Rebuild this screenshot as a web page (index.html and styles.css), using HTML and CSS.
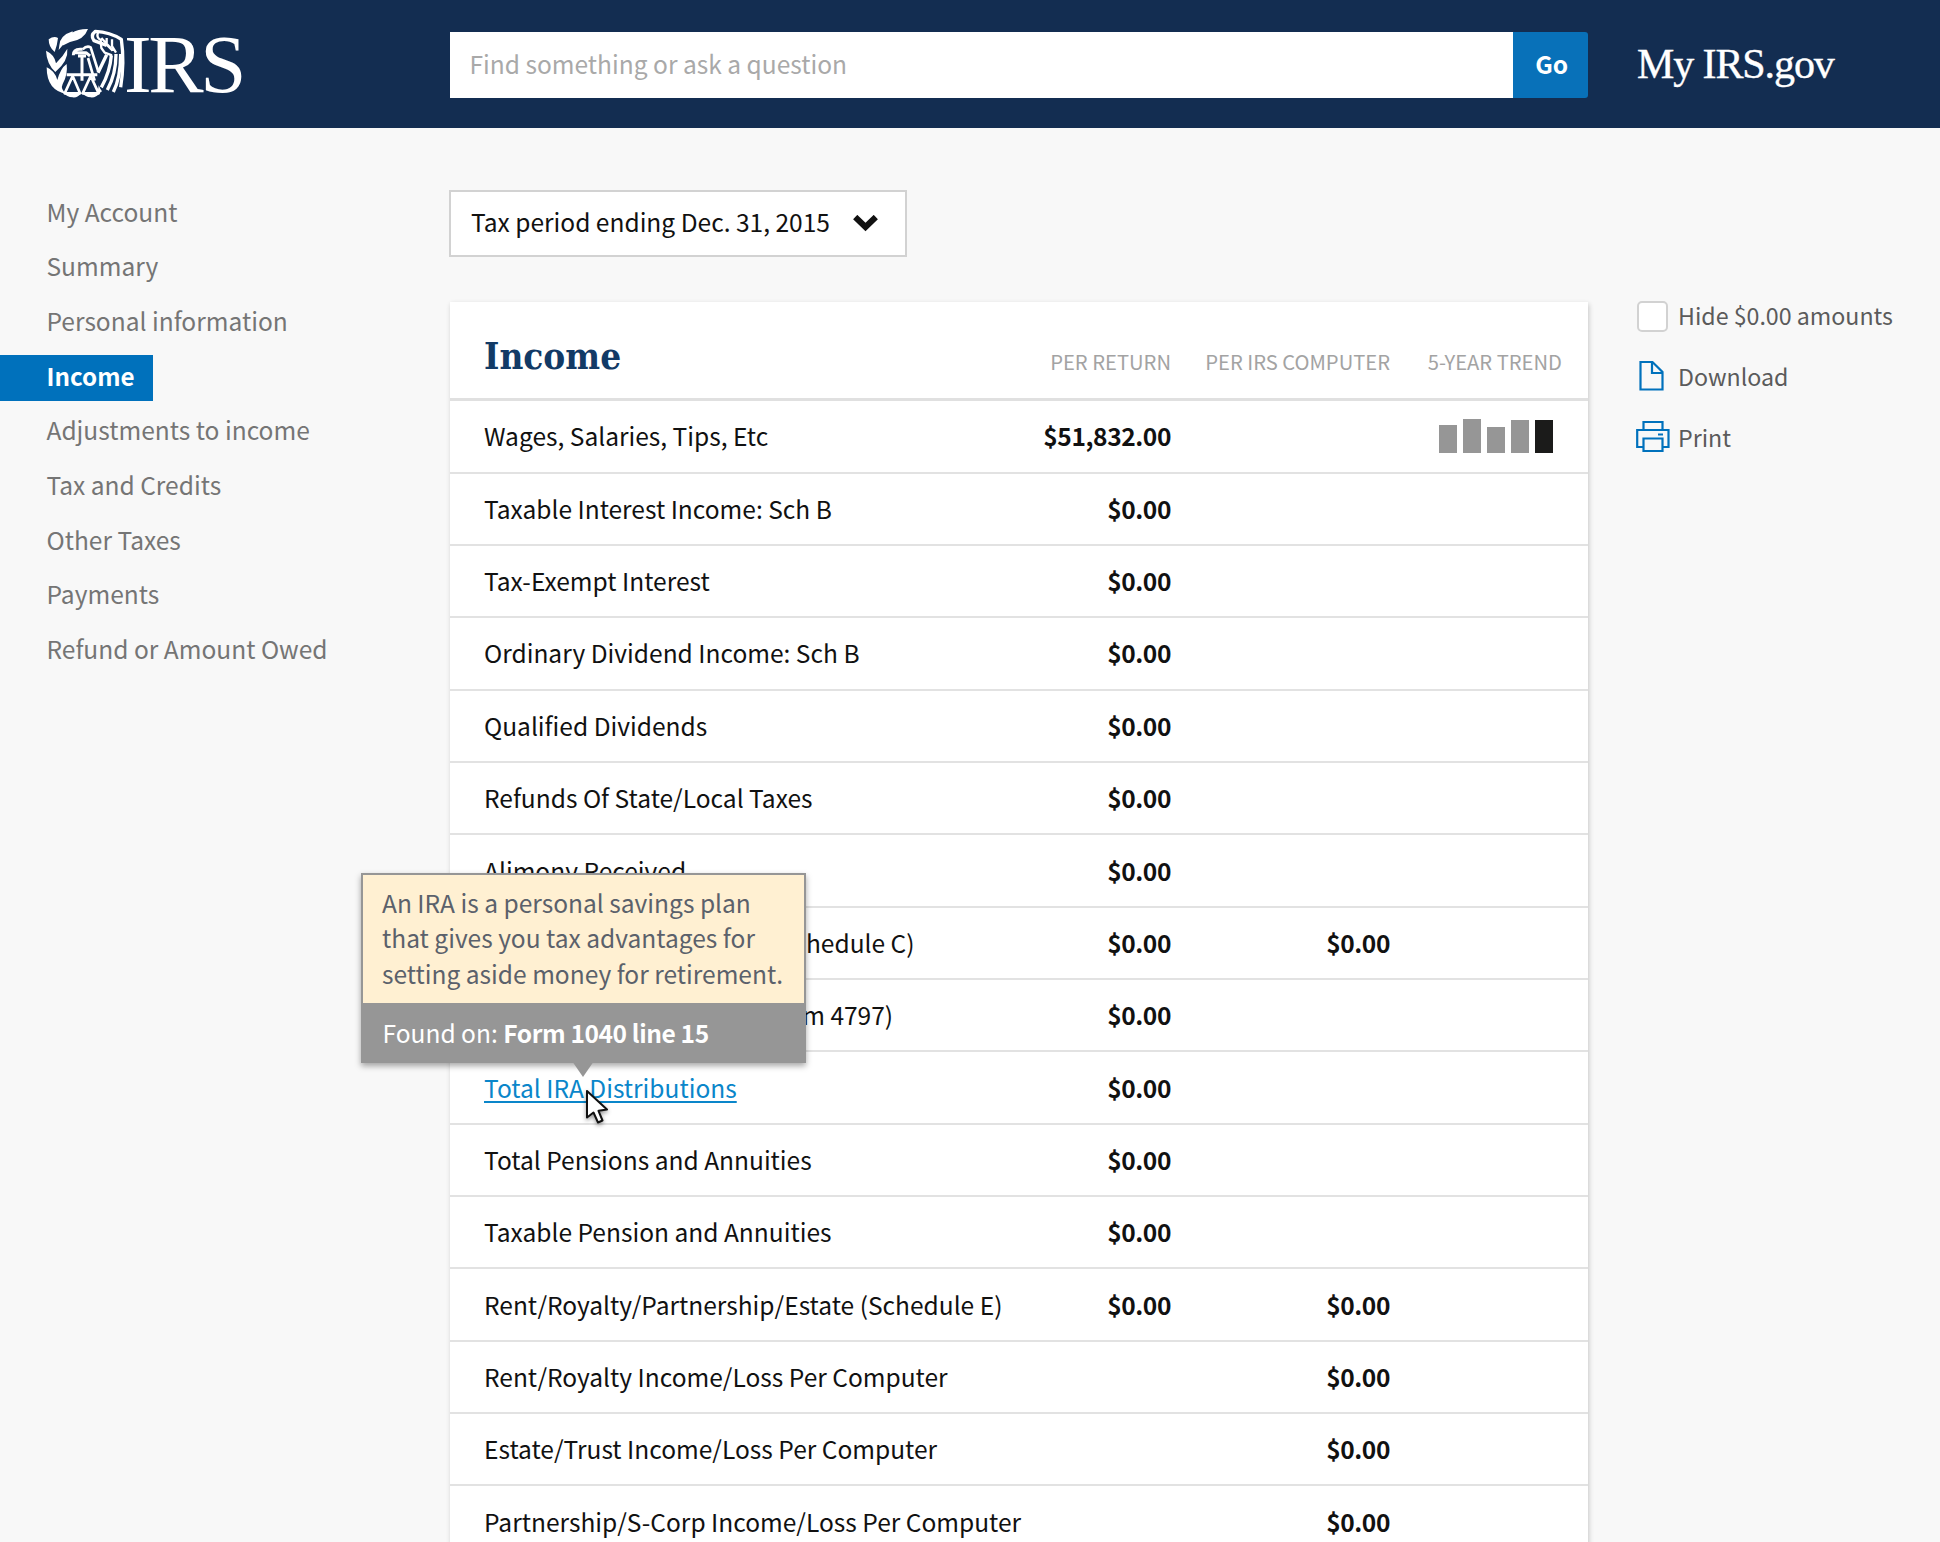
FILE: index.html
```html
<!DOCTYPE html>
<html lang="en">
<head>
<meta charset="utf-8">
<title>My IRS.gov – Income</title>
<link rel="stylesheet" href="styles.css">
</head>
<body>
<header class="masthead">
  <a class="logo" href="#" aria-label="IRS">
    <svg class="emblem" viewBox="0 0 264 240" width="88" height="80" fill="#fff">
      <path d="M20 46 Q36 34 48 42 Q46 62 38 84 Q20 70 20 46Z M52 64 Q54 34 92 22 Q92 44 70 54 L50 78Z M60 62 Q80 14 138 15 Q126 48 84 54 L64 64Z M12 80 Q38 92 42 118 Q64 96 76 74 Q80 110 40 144 Q14 120 12 80Z M14 130 Q38 140 46 168 Q56 132 74 120 Q78 152 62 180 Q54 196 74 210 Q14 200 14 130Z"/>
      <g fill="none" stroke="#fff" stroke-width="8" stroke-linejoin="round">
        <path d="M94 94 Q94 76 114 76 H122 M96 86 H132 L144 96 M108 96 H132 M120 96 V170 M74 152 H166" stroke-width="9"/>
        <path d="M92 156 L68 208 H114 Z M146 156 L122 208 H170 Z"/>
        <path d="M122 76 Q134 64 146 70 L168 140 M138 102 L158 170"/>
        <path d="M168 146 L194 92 M194 64 L156 50 Q144 34 160 22 Q204 24 238 46 Q248 116 236 190" stroke-width="10"/>
        <path d="M168 26 Q162 40 176 48 L178 72 L188 86 L210 94 M178 42 L206 72 M194 42 V62 L212 80 M210 46 V66 L222 86" stroke-width="7"/>
        <path d="M208 94 Q204 144 178 190 M222 90 Q222 150 196 198" stroke-width="10"/>
        <path d="M236 90 Q236 160 214 204" stroke-width="10"/>
      </g>
      <path d="M64 206 H118 Q108 222 92 220 Q74 218 64 206Z M120 206 H174 Q162 222 146 220 Q130 219 120 206Z M170 184 Q176 198 180 202 L166 212Z"/>
    </svg>
    <span class="wordmark">IRS</span>
  </a>
  <form class="search">
    <input class="search-field" type="text" placeholder="Find something or ask a question">
    <button class="search-go" type="button">Go</button>
  </form>
  <a class="site-name" href="#">My IRS.gov</a>
</header>
<div class="page">
  <nav class="side-nav">
    <a href="#">My Account</a>
    <a href="#">Summary</a>
    <a href="#">Personal information</a>
    <a href="#" class="active">Income</a>
    <a href="#">Adjustments to income</a>
    <a href="#">Tax and Credits</a>
    <a href="#">Other Taxes</a>
    <a href="#">Payments</a>
    <a href="#">Refund or Amount Owed</a>
  </nav>
  <main class="content">
    <button class="period" type="button">
      <span>Tax period ending Dec. 31, 2015</span>
      <svg width="25" height="17" viewBox="0 0 25 17"><path d="M2.2 2 L12.5 12 L22.8 2" fill="none" stroke="#111" stroke-width="6"/></svg>
    </button>
    <section class="card">
      <div class="card-head">
        <h1>Income</h1>
        <span class="col">PER RETURN</span>
        <span class="col">PER IRS COMPUTER</span>
        <span class="col">5-YEAR TREND</span>
      </div>
      <div class="row"><span>Wages, Salaries, Tips, Etc</span><b>$51,832.00</b><b></b>
        <div class="trend"><i style="height:28px"></i><i style="height:34px"></i><i style="height:26px"></i><i style="height:33px"></i><i class="now" style="height:33px"></i></div></div>
      <div class="row"><span>Taxable Interest Income: Sch B</span><b>$0.00</b></div>
      <div class="row"><span>Tax-Exempt Interest</span><b>$0.00</b></div>
      <div class="row"><span>Ordinary Dividend Income: Sch B</span><b>$0.00</b></div>
      <div class="row"><span>Qualified Dividends</span><b>$0.00</b></div>
      <div class="row"><span>Refunds Of State/Local Taxes</span><b>$0.00</b></div>
      <div class="row"><span>Alimony Received</span><b>$0.00</b></div>
      <div class="row"><span>Business Income Or Loss (Schedule C)</span><b>$0.00</b><b>$0.00</b></div>
      <div class="row"><span>Other Gains And Losses (Form 4797)</span><b>$0.00</b></div>
      <div class="row"><span class="term"><a href="#">Total IRA Distributions</a>
        <span class="tip"><span class="tip-text">An IRA is a personal savings plan<br>that gives you tax advantages for<br>setting aside money for retirement.</span><span class="tip-source">Found on: <strong>Form 1040 line 15</strong></span></span>
        <svg class="cursor" width="30" height="40" viewBox="0 0 30 40"><path d="M3 3 V29.5 L9.5 24.5 L14 34.5 L18.5 32.5 L14.5 22.8 L23 21.5 Z" fill="#fff" stroke="#111" stroke-width="2" stroke-linejoin="round"/></svg>
      </span><b>$0.00</b></div>
      <div class="row"><span>Total Pensions and Annuities</span><b>$0.00</b></div>
      <div class="row"><span>Taxable Pension and Annuities</span><b>$0.00</b></div>
      <div class="row"><span>Rent/Royalty/Partnership/Estate (Schedule E)</span><b>$0.00</b><b>$0.00</b></div>
      <div class="row"><span>Rent/Royalty Income/Loss Per Computer</span><b></b><b>$0.00</b></div>
      <div class="row"><span>Estate/Trust Income/Loss Per Computer</span><b></b><b>$0.00</b></div>
      <div class="row"><span>Partnership/S-Corp Income/Loss Per Computer</span><b></b><b>$0.00</b></div>
    </section>
  </main>
  <aside class="tools">
    <label><span class="check"></span><span class="label">Hide $0.00 amounts</span></label>
    <a href="#"><svg width="34" height="34" viewBox="0 0 34 34" fill="none" stroke="#0071bc" stroke-width="2.2"><path d="M4.5 3 H16.5 L26.5 13 V30.5 H4.5 Z M16 3 V14 H26.5"/></svg><span class="label">Download</span></a>
    <a href="#"><svg width="34" height="34" viewBox="0 0 34 34" fill="none" stroke="#0071bc" stroke-width="2.2"><path d="M7.5 10 V2 H26.5 V10 M7.5 27 H1.2 V10 H32.5 V27 H26.5 M7.5 18.5 H26.5 V31 H7.5 Z M22 14.5 H27"/></svg><span class="label">Print</span></a>
  </aside>
</div>
</body>
</html>
```
FILE: styles.css
```css
* { box-sizing: border-box; }
body {
  margin: 0;
  height: 1542px;
  overflow: hidden;
  background: #f8f8f8;
  color: #111;
  font: 24.54px/36px "Noto Sans CJK SC", "Open Sans", sans-serif;
}
a { color: inherit; text-decoration: none; }
b, strong { font-weight: 600; letter-spacing: -.4px; }

.masthead { display: flex; align-items: center; height: 128.4px; padding: 0 0 0 42px; background: #132d51; color: #fff; }
.logo { display: flex; align-items: center; width: 408px; height: 80px; }
.wordmark { margin-left: -6px; font: 83px/70px "Liberation Serif", serif; letter-spacing: -3.4px; }
.search { display: flex; width: 1138px; height: 66px; margin: 1px 0 0; }
.search-field { flex: 1; padding: 0 19px 1px 19.5px; border: 0; background: #fff; font: inherit; }
.search-field::placeholder { color: #a9a9a9; opacity: 1; }
.search-go { width: 75.5px; padding: 0 0 2px 3px; border: 0; border-radius: 0 3px 3px 0; background: #0871b9; color: #fff; font: inherit; font-weight: 600; }
.site-name { margin-left: 49px; font: 42px/50px "Liberation Serif", serif; letter-spacing: -1.1px; -webkit-text-stroke: .4px #fff; }

.page { display: flex; align-items: flex-start; }
.side-nav { display: flex; flex-direction: column; align-items: flex-start; gap: 8.25px; width: 450px; padding-top: 62.4px; color: #757575; }
.side-nav a { height: 46.4px; padding: 0 18px 0 46.5px; line-height: 41px; }
.side-nav .active { background: #0071bc; color: #fff; font-size: 24.2px; font-weight: 700; }

.content { width: 1138px; padding-top: 61.5px; }
.period { display: flex; align-items: center; justify-content: space-between; width: 458px; height: 67px; margin: 0 0 45px -1px; padding: 0 27px 0 20px; border: 2px solid #d2d2d2; background: #fff; color: inherit; font: inherit; }
.period span { padding-bottom: 2px; }
.card { background: #fff; box-shadow: 1px 2px 5px rgba(0, 0, 0, .2); }
.card-head, .row { display: grid; grid-template-columns: 543px 144px 219px 1fr; padding: 0 35px 0 34px; }
.card-head { align-items: center; height: 99.4px; padding-right: 26px; border-bottom: 3px solid #e0e0e0; }
.card-head h1 { margin: 0; padding-top: 13px; color: #123a66; font: bold 36.6px/50px "DejaVu Serif Condensed", "DejaVu Serif", serif; }
.col { padding-top: 23px; color: #a3a3a3; font-size: 20.2px; text-align: right; white-space: nowrap; }
.row { align-items: center; height: 72.35px; border-bottom: 2px solid #e2e2e2; white-space: nowrap; }
.row b { text-align: right; }
.trend { display: flex; align-items: flex-end; justify-content: flex-end; gap: 6px; height: 36px; margin-bottom: 2px; }
.trend i { width: 18px; background: #969696; }
.trend .now { background: #1b1b1a; }

.term { position: relative; }
.term a { color: #0a86ca; text-decoration: underline 2px; text-underline-offset: 3px; }
.tip { position: absolute; left: -123px; bottom: 43px; width: 444.5px; background: #969696; border: 2px solid #969696; color: #5b616b; box-shadow: 0 3px 6px rgba(0, 0, 0, .35); line-height: 35.5px; }
.tip::after { content: ""; position: absolute; left: 209px; top: 100%; border: solid transparent; border-width: 16px 11px 0; border-top-color: #969696; }
.tip-text { display: block; height: 128px; padding: 10px 19px; background: #fff0d2; }
.tip-source { display: block; height: 58px; padding: 12px 19.5px; color: #fff; }
.cursor { position: absolute; left: 100px; top: 18px; filter: drop-shadow(0 2px 2px rgba(0, 0, 0, .4)); }

.tools { display: flex; flex-direction: column; gap: 15px; padding: 165px 0 0 48px; color: #5b5b5b; font-size: 23.2px; }
.tools > * { display: flex; align-items: center; gap: 8px; height: 46px; }
.tools svg { margin-top: -3px; }
.tools .label { padding-bottom: 3px; }
.check { width: 31px; height: 31px; margin-left: 1px; margin-right: 2px; border: 2px solid #d2d2d2; border-radius: 5px; background: #fff; }
```
